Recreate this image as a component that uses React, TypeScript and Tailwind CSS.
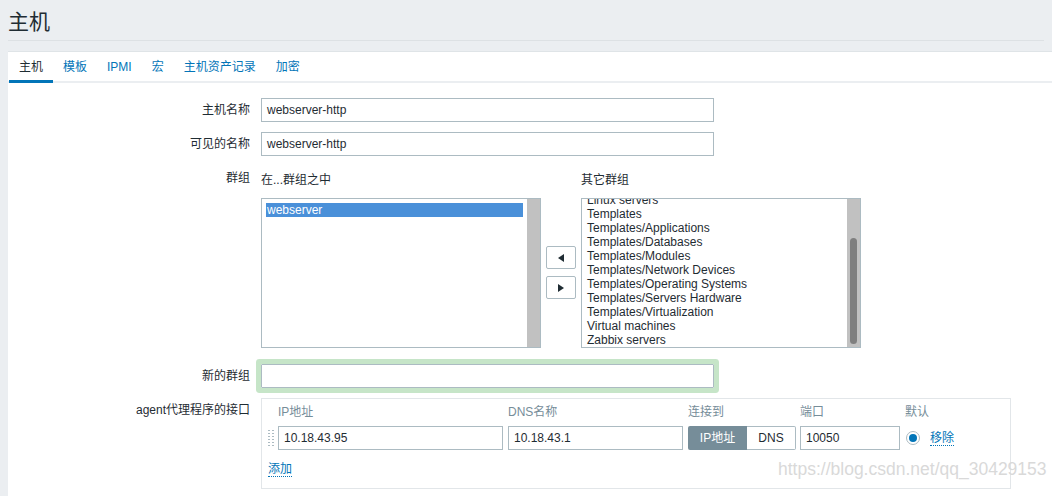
import React from "react";

const font = { fontFamily: '"Liberation Sans", Arial, "Noto Sans CJK SC", sans-serif' };

function Row({ label, children, className = "" }: { label: string; children: React.ReactNode; className?: string }) {
  return (
    <div className={"flex items-start " + className}>
      <div className="w-[242px] shrink-0 text-right leading-[24px] text-[12px] text-[#1f2c33]">{label}</div>
      <div className="ml-[11px]">{children}</div>
    </div>
  );
}

const rightItems = [
  "Linux servers",
  "Templates",
  "Templates/Applications",
  "Templates/Databases",
  "Templates/Modules",
  "Templates/Network Devices",
  "Templates/Operating Systems",
  "Templates/Servers Hardware",
  "Templates/Virtualization",
  "Virtual machines",
  "Zabbix servers",
];

export default function App() {
  const tabs = ["主机", "模板", "IPMI", "宏", "主机资产记录", "加密"];
  return (
    <div style={font} className="relative w-[1052px] h-[496px] overflow-hidden bg-[#ebeef1] text-[12px] text-[#1f2c33]">
      <div className="h-[41px] mx-[8px] border-b border-[#dde1e4] flex items-center">
        <h1 className="text-[21px] leading-none text-[#1f2c33] pt-[3px]">主机</h1>
      </div>
      <div className="ml-[8px] mt-[10px] bg-white border-t border-[#dfe4e7] h-[460px]">
        <div className="flex items-start h-[31px] border-b-2 border-[#ebeef1]">
          {tabs.map((t, i) => (
            <div
              key={t}
              className={
                "px-[10px] pt-[4px] leading-[22px] " +
                (i === 0
                  ? "h-[31px] text-[#1f2c33] border-b-[3px] border-[#0275b8] ml-[1px]"
                  : "h-[29px] text-[#0275b8]")
              }
            >
              {t}
            </div>
          ))}
        </div>
        <div className="pt-[15px]">
          <Row label="主机名称">
            <div className="w-[453px] h-[24px] border border-[#acbbc2] px-[5px] leading-[22px]">webserver-http</div>
          </Row>
          <Row label="可见的名称" className="mt-[10px]">
            <div className="w-[453px] h-[24px] border border-[#acbbc2] px-[5px] leading-[22px]">webserver-http</div>
          </Row>
          <Row label="群组" className="mt-[10px]">
            <div className="flex items-start">
              <div>
                <div className="mt-[2px] leading-[24px] mb-[6px]">在...群组之中</div>
                <div className="w-[280px] h-[150px] border border-[#acbbc2] flex">
                  <div className="flex-1 pt-[4px] pl-[4px] pr-[4px]">
                    <div className="bg-[#4a90d9] text-white leading-[14px] pl-[1px]">webserver</div>
                  </div>
                  <div className="w-[13px] bg-[#c1c1c1]" />
                </div>
              </div>
              <div className="w-[40px] flex flex-col items-center pt-[80px] gap-[7px]">
                <div className="w-[30px] h-[23px] border border-[#acbbc2] rounded-[2px] flex items-center justify-center">
                  <svg width="6" height="8" viewBox="0 0 6 8"><path d="M6 0 L0 4 L6 8 Z" fill="#1f2c33" /></svg>
                </div>
                <div className="w-[30px] h-[23px] border border-[#acbbc2] rounded-[2px] flex items-center justify-center">
                  <svg width="6" height="8" viewBox="0 0 6 8"><path d="M0 0 L6 4 L0 8 Z" fill="#1f2c33" /></svg>
                </div>
              </div>
              <div>
                <div className="mt-[2px] leading-[24px] mb-[6px]">其它群组</div>
                <div className="w-[280px] h-[150px] border border-[#acbbc2] flex">
                  <div className="flex-1 overflow-hidden pl-[5px]">
                    <div className="-mt-[6px]">
                      {rightItems.map((it) => (
                        <div key={it} className="leading-[14px] text-[#1f2c33]">{it}</div>
                      ))}
                    </div>
                  </div>
                  <div className="w-[13px] bg-[#c1c1c1] relative">
                    <div className="absolute left-[3px] top-[39px] w-[7px] h-[106px] rounded-[4px] bg-[#7f7f7f]" />
                  </div>
                </div>
              </div>
            </div>
          </Row>
          <Row label="新的群组" className="mt-[16px]">
            <div className="w-[453px] h-[24px] border border-[#acbbc2] rounded-[1px] ring-[5px] ring-[#c6e5c8]" />
          </Row>
          <Row label="agent代理程序的接口" className="mt-[10px]">
            <div className="w-[750px] h-[91px] border border-[#e2e6e9] pl-[5px] pt-[5px]">
              <div className="flex items-center h-[16px] text-[#768d99] pl-[11px]">
                <div className="w-[230px]">IP地址</div>
                <div className="w-[180px]">DNS名称</div>
                <div className="w-[112px]">连接到</div>
                <div className="w-[105px]">端口</div>
                <div>默认</div>
              </div>
              <div className="flex items-center mt-[6px]">
                <div className="w-[11px] h-[24px] flex items-center">
                  <div className="grid grid-cols-2 gap-x-[2px] gap-y-[2px] ml-[1px]">
                    {Array.from({ length: 12 }).map((_, i) => (
                      <div key={i} className="w-[2px] h-[1px] bg-[#acbbc2]" />
                    ))}
                  </div>
                </div>
                <div className="w-[225px] h-[24px] border border-[#acbbc2] px-[5px] leading-[22px]">10.18.43.95</div>
                <div className="ml-[5px] w-[175px] h-[24px] border border-[#acbbc2] px-[5px] leading-[22px]">10.18.43.1</div>
                <div className="ml-[5px] flex h-[24px]">
                  <div className="w-[59px] bg-[#768d99] text-white leading-[24px] text-center rounded-l-[2px]">IP地址</div>
                  <div className="w-[49px] border border-l-0 border-[#acbbc2] leading-[22px] text-center rounded-r-[2px]">DNS</div>
                </div>
                <div className="ml-[4px] w-[100px] h-[24px] border border-[#acbbc2] px-[5px] leading-[22px]">10050</div>
                <div className="ml-[6px] w-[14px] h-[14px] rounded-full border border-[#acbbc2] flex items-center justify-center">
                  <div className="w-[8px] h-[8px] rounded-full bg-[#0275b8]" />
                </div>
                <div className="ml-[10px] text-[#0275b8] border-b border-dotted border-[#0275b8] leading-[14px]">移除</div>
              </div>
              <div className="mt-[12px] flex">
                <div className="text-[#0275b8] border-b border-dotted border-[#0275b8] leading-[14px] ml-[1px]">添加</div>
              </div>
            </div>
          </Row>
        </div>
      </div>
      <div className="absolute left-[778px] top-[457px] text-[17.5px] leading-[24px] text-[#d9d9d9] whitespace-nowrap" style={{ fontFamily: '"Liberation Sans", Arial, sans-serif' }}>
        https://blog.csdn.net/qq_30429153
      </div>
    </div>
  );
}
